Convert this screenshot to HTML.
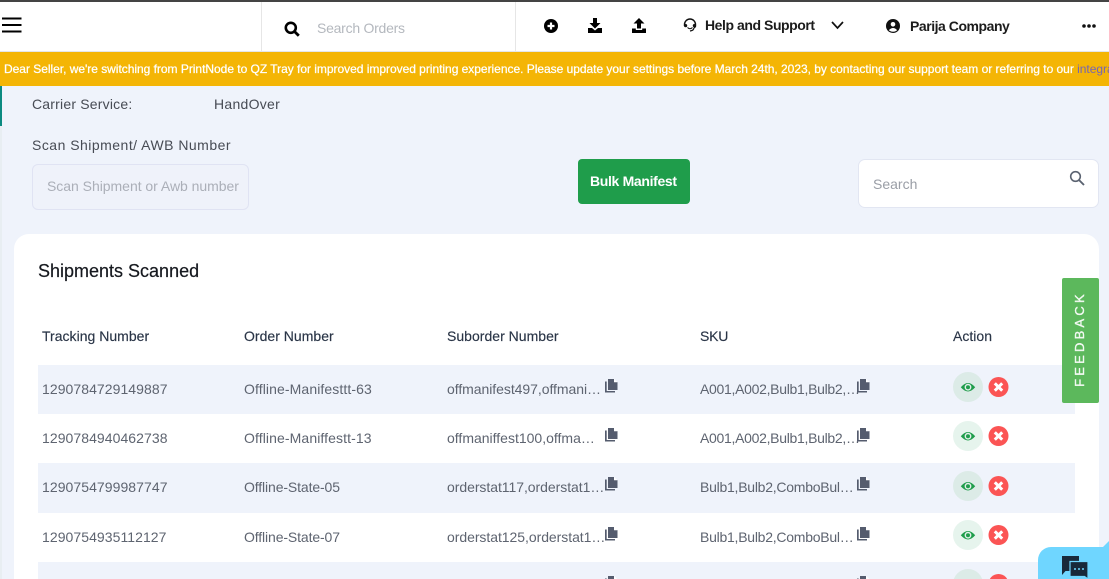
<!DOCTYPE html>
<html><head><meta charset="utf-8"><style>
html,body{margin:0;padding:0;width:1109px;height:579px;overflow:hidden;background:#eff3fb;font-family:"Liberation Sans",sans-serif}
#p{position:relative;width:1109px;height:579px;overflow:hidden;background:#eff3fb}
.a{position:absolute}
.t{position:absolute;white-space:nowrap;line-height:16px}
.h{font-size:14px;color:#2a3547;letter-spacing:.02px;-webkit-text-stroke:.15px #2a3547}
.c{font-size:14px;color:#5e6470}
.n{letter-spacing:.06px}
.row{position:absolute;left:38px;width:1037px}
svg{position:absolute;overflow:visible}
</style></head><body><div id="p">
<div class="a" style="left:0;top:0;width:1109px;height:2px;background:#444"></div>
<div class="a" style="left:0;top:2px;width:1109px;height:50px;background:#fff;border-bottom:1px solid #e4e6ea;box-sizing:border-box"></div>
<div class="a" style="left:261px;top:2px;width:1px;height:49px;background:#e6e6e6"></div>
<div class="a" style="left:515px;top:2px;width:1px;height:49px;background:#e6e6e6"></div>
<svg style="left:2px;top:17px" width="20" height="16"><path d="M0 1.5H19.5M0 8H19.5M0 14.5H19.5" stroke="#000" stroke-width="2"/></svg>
<svg style="left:284px;top:21px" width="16" height="16"><circle cx="6.8" cy="6.8" r="5" fill="none" stroke="#000" stroke-width="2.6"/><path d="M10.5 10.5L14.8 14.8" stroke="#000" stroke-width="2.8"/></svg>
<div class="t" style="left:317px;top:20px;font-size:14px;color:#b4b8be;letter-spacing:-.25px">Search Orders</div>
<svg style="left:544px;top:19px" width="14" height="14"><circle cx="7" cy="7" r="7" fill="#000"/><path d="M7 3.5V10.5M3.5 7H10.5" stroke="#fff" stroke-width="2.2"/></svg>
<svg style="left:588px;top:18px" width="14" height="15"><path d="M5 0H9V5H12.5L7 10.5L1.5 5H5Z" fill="#000"/><path d="M0 10H4L7 12.5L10 10H14V15H0Z" fill="#000"/></svg>
<svg style="left:632px;top:18px" width="14" height="15"><path d="M7 0L12.5 5.5H9V10.5H5V5.5H1.5Z" fill="#000"/><path d="M0 10.5H3.8V12H10.2V10.5H14V15H0Z" fill="#000"/></svg>
<svg style="left:683px;top:18px" width="14" height="15"><path d="M1.5 8V6.5A5.5 5.5 0 0 1 12.5 6.5V8A1.5 1.5 0 0 1 11 9.5" fill="none" stroke="#111" stroke-width="1.4"/><circle cx="2.6" cy="7.6" r="1.6" fill="#111"/><circle cx="11.4" cy="7.6" r="1.6" fill="#111"/><path d="M11 9.5Q11 12.5 7 13" fill="none" stroke="#111" stroke-width="1.2"/><path d="M4.5 9.5Q7 12 9.5 9.5" fill="none" stroke="#111" stroke-width="1"/></svg>
<div class="t" style="left:705px;top:17px;font-size:14px;font-weight:bold;color:#1c1c1c;letter-spacing:-.44px">Help and Support</div>
<svg style="left:831px;top:21px" width="13" height="9"><path d="M1 1L6.5 7L12 1" fill="none" stroke="#111" stroke-width="1.7"/></svg>
<svg style="left:886px;top:19px" width="14" height="14"><circle cx="7" cy="7" r="7" fill="#111"/><circle cx="7" cy="5.3" r="2.3" fill="#fff"/><path d="M2.8 11.2Q7 6.8 11.2 11.2Q7 14.4 2.8 11.2Z" fill="#fff"/></svg>
<div class="t" style="left:910px;top:18px;font-size:14px;font-weight:bold;color:#1c1c1c;letter-spacing:-.46px">Parija Company</div>
<svg style="left:1082px;top:24px" width="14" height="4"><circle cx="2" cy="2" r="1.8" fill="#111"/><circle cx="7" cy="2" r="1.8" fill="#111"/><circle cx="12" cy="2" r="1.8" fill="#111"/></svg>
<div class="a" style="left:0;top:52px;width:1109px;height:34px;background:#f4b505;overflow:hidden">
<div class="t" style="left:4px;top:9px;font-size:12px;color:#fff;letter-spacing:-.025px;-webkit-text-stroke:.25px #fff">Dear Seller, we're switching from PrintNode to QZ Tray for improved improved printing experience. Please update your settings before March 24th, 2023, by contacting our support team or referring to our <span style="color:#7565b5;-webkit-text-stroke:0">integration guide</span></div>
</div>
<div class="a" style="left:0;top:86px;width:2px;height:493px;background:#e8eef2"></div>
<div class="a" style="left:0;top:86px;width:2px;height:40px;background:#0b8a80"></div>
<div class="t" style="left:32px;top:96px;font-size:14px;color:#474b54;letter-spacing:.2px">Carrier Service:</div>
<div class="t" style="left:214px;top:96px;font-size:14px;color:#474b54;letter-spacing:.28px">HandOver</div>
<div class="t" style="left:32px;top:137px;font-size:14px;color:#474b54;letter-spacing:.48px">Scan Shipment/ AWB Number</div>
<div class="a" style="left:32px;top:164px;width:217px;height:46px;box-sizing:border-box;border:1px solid #e0e3f3;border-radius:6px;background:#eff2fa"></div>
<div class="t" style="left:47px;top:178px;font-size:14px;color:#abafb8;letter-spacing:-.03px">Scan Shipment or Awb number</div>
<div class="a" style="left:578px;top:159px;width:112px;height:45px;background:#1f9d4b;border-radius:4px"></div>
<div class="t" style="left:590px;top:173px;font-size:14px;font-weight:bold;color:#fff;letter-spacing:-.33px">Bulk Manifest</div>
<div class="a" style="left:858px;top:159px;width:241px;height:49px;box-sizing:border-box;background:#fff;border:1px solid #e2e6f2;border-radius:7px"></div>
<div class="t" style="left:873px;top:176px;font-size:14px;color:#9a9ea6">Search</div>
<svg style="left:1069px;top:170px" width="16" height="16"><circle cx="6.5" cy="6.5" r="4.8" fill="none" stroke="#5a6270" stroke-width="1.6"/><path d="M10 10L15 15" stroke="#5a6270" stroke-width="1.9"/></svg>
<div class="a" style="left:14px;top:234px;width:1085px;height:345px;background:#fff;border-radius:15px 15px 0 0"></div>
<div class="t" style="left:38px;top:261px;font-size:18px;line-height:20px;color:#16191f;-webkit-text-stroke:.2px #16191f">Shipments Scanned</div>
<div class="t h" style="left:42px;top:328px">Tracking Number</div>
<div class="t h" style="left:244px;top:328px">Order Number</div>
<div class="t h" style="left:447px;top:328px">Suborder Number</div>
<div class="t h" style="left:700px;top:328px;letter-spacing:-.2px">SKU</div>
<div class="t h" style="left:953px;top:328px">Action</div>
<div class="row" style="top:365px;height:49px;background:#eff3fb"></div>
<div class="row" style="top:463px;height:50px;background:#eff3fb"></div>
<div class="row" style="top:562px;height:17px;background:#eff3fb"></div>
<div class="t c n" style="left:42px;top:381px">1290784729149887</div><div class="t c" style="left:244px;top:381px;letter-spacing:.1px">Offline-Manifesttt-63</div><div class="t c" style="left:447px;top:381px;letter-spacing:-.05px">offmanifest497,offmani…</div><div class="t c" style="left:700px;top:381px;letter-spacing:-.3px">A001,A002,Bulb1,Bulb2,…</div>
<div class="t c n" style="left:42px;top:430px">1290784940462738</div><div class="t c" style="left:244px;top:430px;letter-spacing:.1px">Offline-Maniffestt-13</div><div class="t c" style="left:447px;top:430px;letter-spacing:0">offmaniffest100,offma…</div><div class="t c" style="left:700px;top:430px;letter-spacing:-.3px">A001,A002,Bulb1,Bulb2,…</div>
<div class="t c n" style="left:42px;top:479px">1290754799987747</div><div class="t c" style="left:244px;top:479px;letter-spacing:-.12px">Offline-State-05</div><div class="t c" style="left:447px;top:479px;letter-spacing:-.05px">orderstat117,orderstat1…</div><div class="t c" style="left:700px;top:479px;letter-spacing:-.25px">Bulb1,Bulb2,ComboBul…</div>
<div class="t c n" style="left:42px;top:529px">1290754935112127</div><div class="t c" style="left:244px;top:529px;letter-spacing:-.12px">Offline-State-07</div><div class="t c" style="left:447px;top:529px;letter-spacing:-.05px">orderstat125,orderstat1…</div><div class="t c" style="left:700px;top:529px;letter-spacing:-.25px">Bulb1,Bulb2,ComboBul…</div>
<svg width="0" height="0"><defs>
<g id="cp"><path d="M3 0H9V3H12.5V11H3Z" fill="#555c6e"/><path d="M9 0L12.5 3.2H9Z" fill="#fff"/><path d="M0 2.5H1.7V12H10V13.5H0Z" fill="#555c6e"/></g>
<g id="act"><circle cx="15" cy="15" r="15" fill="currentColor"/><path d="M7.8 15.3Q15 6.6 22.2 15.3Q15 23.6 7.8 15.3Z" fill="#1f9d4b"/><circle cx="15" cy="15.2" r="2.7" fill="none" stroke="#e2efea" stroke-width="1.4"/><circle cx="45.5" cy="15" r="10" fill="#fb5454"/><path d="M41.8 11.3L49.2 18.7M49.2 11.3L41.8 18.7" stroke="#fff" stroke-width="3"/></g>
</defs></svg>
<svg style="left:605px;top:379px" width="13" height="14"><use href="#cp"/></svg><svg style="left:857px;top:379px" width="13" height="14"><use href="#cp"/></svg>
<svg style="left:605px;top:428px" width="13" height="14"><use href="#cp"/></svg><svg style="left:857px;top:428px" width="13" height="14"><use href="#cp"/></svg>
<svg style="left:605px;top:477px" width="13" height="14"><use href="#cp"/></svg><svg style="left:857px;top:477px" width="13" height="14"><use href="#cp"/></svg>
<svg style="left:605px;top:527px" width="13" height="14"><use href="#cp"/></svg><svg style="left:857px;top:527px" width="13" height="14"><use href="#cp"/></svg>
<svg style="left:605px;top:576px" width="13" height="14"><use href="#cp"/></svg><svg style="left:857px;top:576px" width="13" height="14"><use href="#cp"/></svg>
<svg style="left:953px;top:372px;color:#dcebe7" width="60" height="30"><use href="#act"/></svg>
<svg style="left:953px;top:421px;color:#e6f4ed" width="60" height="30"><use href="#act"/></svg>
<svg style="left:953px;top:471px;color:#dcebe7" width="60" height="30"><use href="#act"/></svg>
<svg style="left:953px;top:520px;color:#e6f4ed" width="60" height="30"><use href="#act"/></svg>
<svg style="left:953px;top:569px;color:#dcebe7" width="60" height="30"><use href="#act"/></svg>
<div class="a" style="left:1062px;top:278px;width:37px;height:125px;background:#5cb85c;border-radius:2px"></div>
<div class="t" style="left:1080px;top:339px;font-size:13px;color:#f2f9f2;letter-spacing:3.2px;-webkit-text-stroke:.35px #f2f9f2;transform:translate(-50%,-50%) rotate(-90deg)">FEEDBACK</div>
<div class="a" style="left:1038px;top:547px;width:71px;height:32px;background:#6fd6ff;border-radius:13px 0 0 0"></div>
<div class="a" style="left:1102px;top:541px;width:7px;height:7px;background:#6fd6ff;clip-path:polygon(100% 0,100% 100%,0 100%)"></div>
<svg style="left:1062px;top:556px" width="27" height="23"><path d="M0 0H17V15H3.5L0 19Z" fill="#18293a"/><path d="M8 5.5H26V20.5V23L22.5 20.5H8Z" fill="#18293a" stroke="#6fd6ff" stroke-width="1.2"/><circle cx="13" cy="13" r="1" fill="#6fd6ff"/><circle cx="17" cy="13" r="1" fill="#6fd6ff"/><circle cx="21" cy="13" r="1" fill="#6fd6ff"/></svg>
</div></body></html>
